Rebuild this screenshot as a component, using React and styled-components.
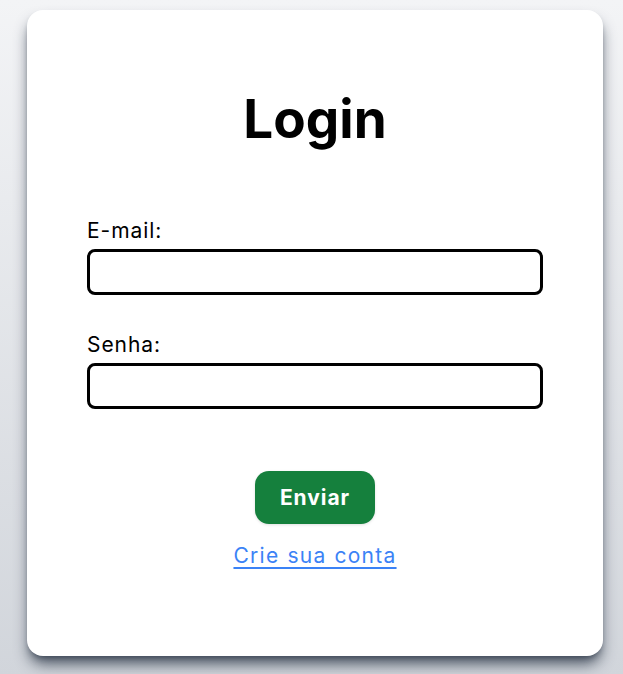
import React from 'react'
import styled, { createGlobalStyle } from 'styled-components'

const GlobalStyle = createGlobalStyle`
  * { box-sizing: border-box; }
  html, body {
    margin: 0;
    padding: 0;
  }
  body {
    font-family: Inter, "Noto Sans", "Liberation Sans", sans-serif;
    background: linear-gradient(to bottom, #f3f4f6, #d1d5db);
    min-height: 100vh;
  }
`

const Page = styled.div`
  min-height: 100vh;
  padding: 10px 20px 20px 27px;
`

const Card = styled.form`
  width: 576px;
  background-color: #ffffff;
  border-radius: 16px;
  padding: 83px 60px 86px;
  display: flex;
  flex-direction: column;
  box-shadow: 0 10px 15px -3px rgba(55, 65, 81, 0.95),
    0 4px 6px -4px rgba(55, 65, 81, 0.9);
`

const Title = styled.h1`
  font-size: 53px;
  line-height: 53px;
  font-weight: 700;
  color: #000;
  text-align: center;
  margin: 0 0 71px;
`

const Field = styled.div`
  display: flex;
  flex-direction: column;
  gap: 4px;
  margin-bottom: ${p => p.$last ? '62px' : '36px'};
`

const Label = styled.label`
  font-size: 21px;
  line-height: 28px;
  letter-spacing: 0.045em;
  color: #000;
`

const Input = styled.input`
  height: 46px;
  width: 100%;
  border: 3px solid #000;
  border-radius: 8px;
  font-size: 18px;
  padding: 0 10px;
  font-family: inherit;
  outline: none;
  background: #fff;
`

const Actions = styled.div`
  display: flex;
  flex-direction: column;
  align-items: center;
  gap: 18px;
`

const Button = styled.button`
  background-color: #15803d;
  color: #fff;
  border: none;
  border-radius: 14px;
  font-family: inherit;
  font-size: 21px;
  font-weight: 700;
  letter-spacing: 0.045em;
  line-height: 29px;
  padding: 12px 25px;
  cursor: pointer;
  box-shadow: 0 1px 3px rgba(0, 0, 0, 0.12);
`

const Link = styled.a`
  color: #3b82f6;
  font-size: 21px;
  line-height: 28px;
  letter-spacing: 0.06em;
  word-spacing: 0.04em;
  text-decoration: underline;
  text-underline-offset: 4px;
`

export default function App() {
  return (
    <>
      <GlobalStyle />
      <Page>
        <Card onSubmit={e => e.preventDefault()}>
          <Title>Login</Title>
          <Field>
            <Label htmlFor="email">E-mail:</Label>
            <Input id="email" type="email" />
          </Field>
          <Field $last>
            <Label htmlFor="senha">Senha:</Label>
            <Input id="senha" type="password" />
          </Field>
          <Actions>
            <Button type="submit">Enviar</Button>
            <Link href="#">Crie sua conta</Link>
          </Actions>
        </Card>
      </Page>
    </>
  )
}
